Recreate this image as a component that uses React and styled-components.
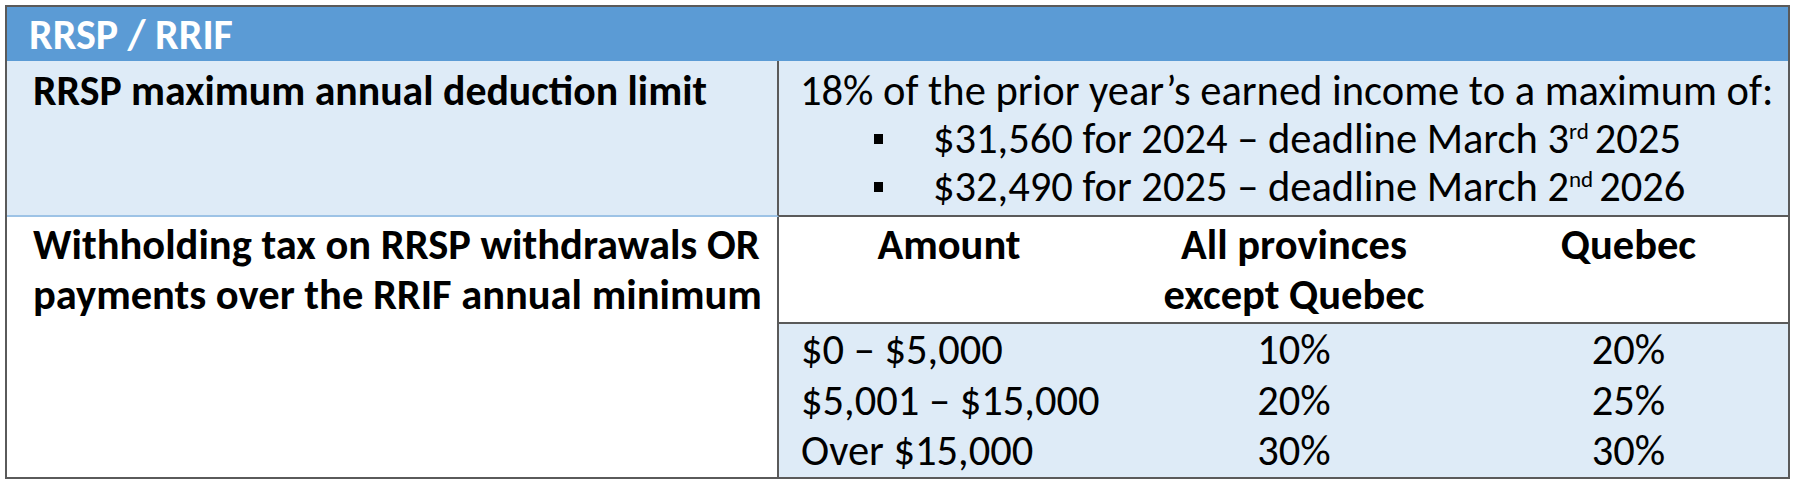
import React from "react";
import styled, { createGlobalStyle } from "styled-components";

const GlobalStyle = createGlobalStyle`
  html, body {
    margin: 0;
    padding: 0;
    background: #ffffff;
  }
  body {
    font-family: Carlito, Calibri, Lato, "Liberation Sans", sans-serif;
    color: #000000;
  }
`;

const Table = styled.div`
  margin: 5px;
  border: 2px solid #5a5a5a;
`;

const HeaderBar = styled.div`
  background: #5b9bd5;
  color: #ffffff;
  font-weight: 700;
  font-size: 42px;
  height: 54px;
  display: flex;
  align-items: center;
  padding-left: 22px;
`;

const Row = styled.div`
  display: grid;
  grid-template-columns: 772px 1fr;
  background: ${(p) => (p.$shaded ? "#deebf7" : "#ffffff")};
`;

const LabelCell = styled.div`
  border-right: 2px solid #5a5a5a;
  border-bottom: ${(p) => (p.$last ? "none" : "2px solid #9dc3e6")};
  padding: ${(p) => (p.$last ? "3px 10px 0 26px" : "6px 10px 4px 26px")};
  font-weight: 700;
  font-size: ${(p) => (p.$last ? "42.5px" : "41.8px")};
  line-height: ${(p) => (p.$last ? "50px" : "48px")};
  white-space: nowrap;
`;

const ValueCell = styled.div`
  border-bottom: ${(p) => (p.$last ? "none" : "2px solid #5a5a5a")};
  padding: ${(p) => (p.$flush ? "0" : "6px 10px 4px 21px")};
  font-size: 42.5px;
  line-height: 48px;
  white-space: nowrap;
`;

const BulletList = styled.ul`
  list-style: none;
  margin: 0;
  padding: 0 0 0 74px;
`;

const BulletItem = styled.li`
  display: flex;
  align-items: center;

  &::before {
    content: "";
    width: 9px;
    height: 10px;
    background: #000000;
    margin-right: 50px;
    flex: none;
  }
`;

const Sup = styled.sup`
  font-size: 23px;
  line-height: 0;
  vertical-align: 14px;
  margin-right: 6px;
`;

const RateGrid = styled.div`
  display: grid;
  grid-template-columns: 340px 350px 1fr;
  background: ${(p) => (p.$head ? "#ffffff" : "#deebf7")};
  border-bottom: ${(p) => (p.$head ? "2px solid #5a5a5a" : "none")};
  padding: ${(p) => (p.$head ? "3px 0 2px" : "1px 0 0")};
  font-size: 42.5px;
  line-height: ${(p) => (p.$head ? "50px" : "50.5px")};
  font-weight: ${(p) => (p.$head ? 700 : 400)};
`;

const RateCell = styled.div`
  text-align: ${(p) => (p.$left ? "left" : "center")};
  padding-left: ${(p) => (p.$left ? "22px" : "0")};
  white-space: nowrap;
`;

const rates = [
  { amount: "$0 – $5,000", other: "10%", quebec: "20%" },
  { amount: "$5,001 – $15,000", other: "20%", quebec: "25%" },
  { amount: "Over $15,000", other: "30%", quebec: "30%" },
];

export default function App() {
  return (
    <>
      <GlobalStyle />
      <Table>
        <HeaderBar>RRSP / RRIF</HeaderBar>

        <Row $shaded>
          <LabelCell>RRSP maximum annual deduction limit</LabelCell>
          <ValueCell>
            18% of the prior year’s earned income to a maximum of:
            <BulletList>
              <BulletItem>
                <span>
                  $31,560 for 2024 – deadline March 3<Sup>rd</Sup>2025
                </span>
              </BulletItem>
              <BulletItem>
                <span>
                  $32,490 for 2025 – deadline March 2<Sup>nd</Sup>2026
                </span>
              </BulletItem>
            </BulletList>
          </ValueCell>
        </Row>

        <Row>
          <LabelCell $last>
            Withholding tax on RRSP withdrawals OR
            <br />
            payments over the RRIF annual minimum
          </LabelCell>
          <ValueCell $flush $last>
            <RateGrid $head>
              <RateCell>Amount</RateCell>
              <RateCell>
                All provinces
                <br />
                except Quebec
              </RateCell>
              <RateCell>Quebec</RateCell>
            </RateGrid>
            <RateGrid>
              {rates.map((r) => (
                <React.Fragment key={r.amount}>
                  <RateCell $left>{r.amount}</RateCell>
                  <RateCell>{r.other}</RateCell>
                  <RateCell>{r.quebec}</RateCell>
                </React.Fragment>
              ))}
            </RateGrid>
          </ValueCell>
        </Row>
      </Table>
    </>
  );
}
